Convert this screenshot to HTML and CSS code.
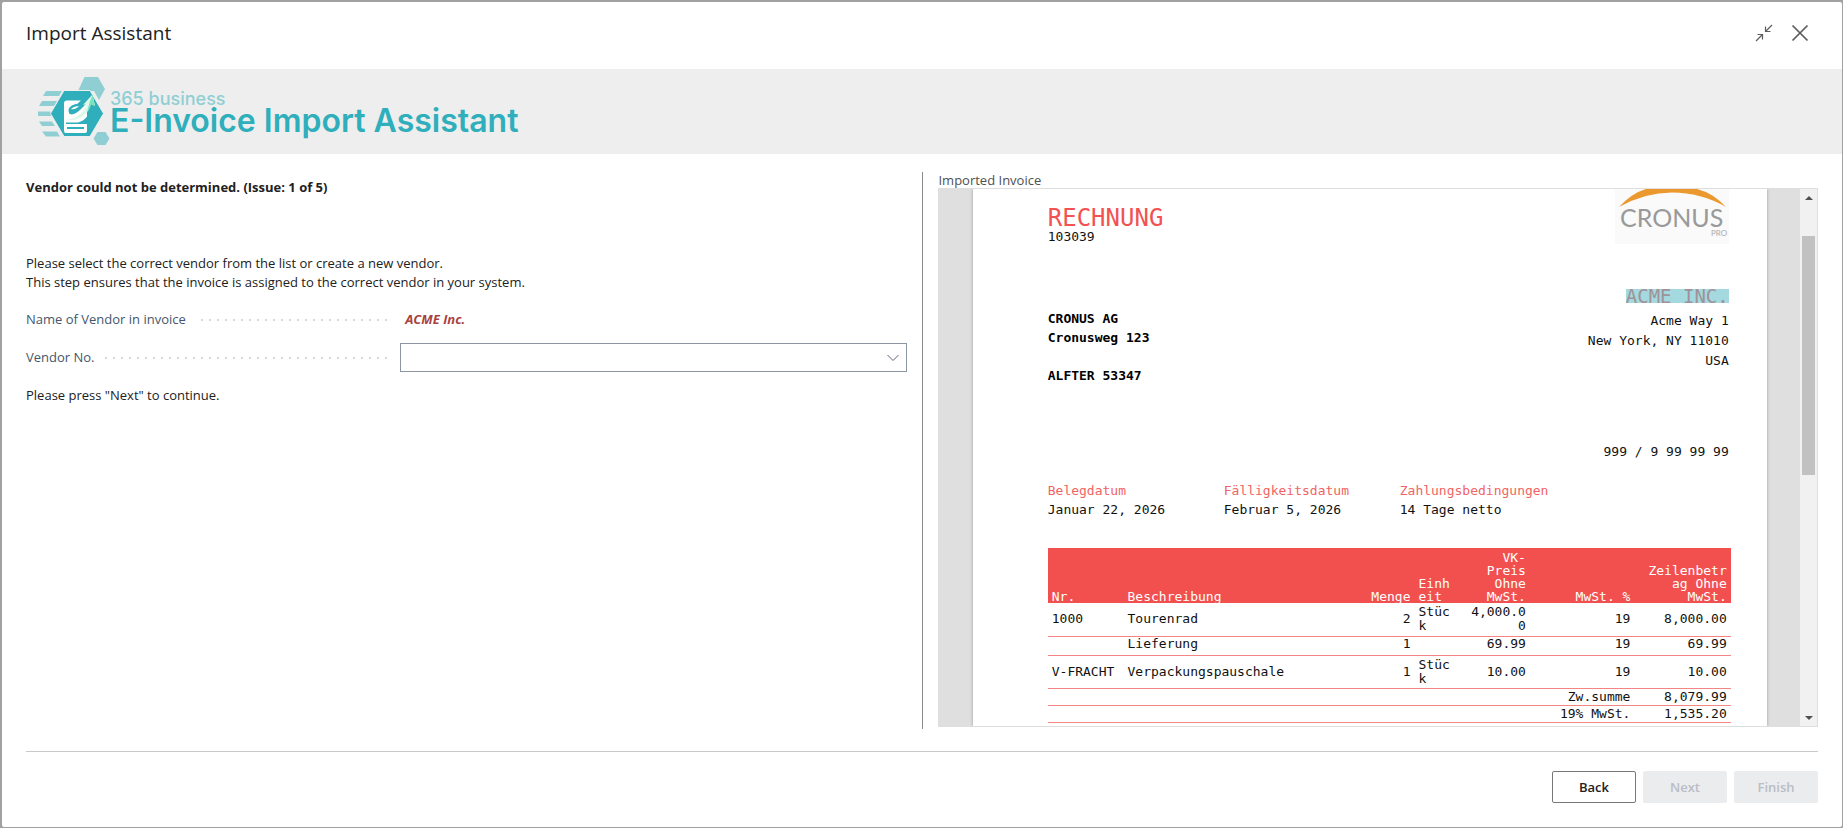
FILE: index.html
```html
<!DOCTYPE html>
<html lang="en">
<head>
<meta charset="utf-8">
<title>Import Assistant</title>
<link rel="stylesheet" href="styles.css">
</head>
<body>
<main class="dialog">
  <header class="dialog-header">
    <h1 class="dialog-title">Import Assistant</h1>
    <div class="window-actions">
      <button class="icon-button" type="button" aria-label="Restore size">
        <svg width="18" height="18" viewBox="0 0 18 18" fill="none" stroke="#5c5c5c" stroke-width="1.200"><path d="M17 1 10.500 7.500M10.500 2.500v5h5M1 17l6.500-6.500M2.500 10.500h5v5"/></svg>
      </button>
      <button class="icon-button" type="button" aria-label="Close">
        <svg width="18" height="18" viewBox="0 0 18 18" fill="none" stroke="#5c5c5c" stroke-width="1.700"><path d="M1.500 1.500l15 15M16.500 1.500l-15 15"/></svg>
      </button>
    </div>
  </header>

  <section class="banner">
    <svg class="banner-logo" width="72" height="70" viewBox="0 0 72 70">
      <g fill="#8fcfd4">
        <path d="M46.500 2H60l7 12-6 11-5-9H40z"/>
        <path d="M59.500 57h8l4 6.500-4 6.500h-8l-4-6.500z"/>
        <path d="M8 16h16l-3 5H5zM4 26h15l-3 5H1zM0 36.500h12l2 4.500H0zM1 46.500h13l3 4.500H4zM4 56.500h15l3 5H8z"/>
      </g>
      <path fill="#2fafbb" stroke="#eee" d="M26 15.500h26l13.500 23-13.500 23H26l-13.500-23z"/>
      <path fill="#fff" d="M29 25.500h14l-4 3.500c-6 1-9 5-8 9 2 3 7 1 12-4l6-6v28q0 2-2 2H28q-2 0-2-2V28.500q0-3 3-3z"/>
      <path fill="#2fafbb" d="M31 37c-2-4 3-8 9-8h5c-3 5-8 9-12 9q-1 0-2-1z"/>
      <path fill="#fff" d="M33 34c2-2 5-3 8-3-2 2-5 4-8 3z"/>
      <path fill="#2fafbb" d="M28 47.500h12c4-1 7-3 9-6V49H28zM29 52h17v2H29z"/>
      <path fill="#dff8ec" d="M27 45c9-1 18-5 22-16l-4 1 9.500-10.500L57 31l-4-2c-3 11-13 18-26 16z"/>
      <path fill="#7de3b8" d="M54.500 19.500 57 31l-4-2c-1 4-2 6-4 8l3-11z"/>
    </svg>
    <div class="banner-text">
      <span class="banner-product">365 business</span>
      <span class="banner-name">E-Invoice Import Assistant</span>
    </div>
  </section>

  <div class="dialog-body">
    <form class="vendor-form" id="vendor-form">
      <h2 class="issue">Vendor could not be determined. (Issue: 1 of 5)</h2>
      <p class="text">Please select the correct vendor from the list or create a new vendor.<br>This step ensures that the invoice is assigned to the correct vendor in your system.</p>
      <div class="field">
        <div class="field-caption"><span class="field-label">Name of Vendor in invoice</span><span class="dots"></span></div>
        <output class="vendor-name">ACME Inc.</output>
      </div>
      <div class="field">
        <div class="field-caption"><label class="field-label" for="vendor-no">Vendor No.</label><span class="dots"></span></div>
        <div class="lookup">
          <input class="lookup-input" id="vendor-no" type="text">
          <button class="lookup-button" type="button" aria-label="Choose a vendor">
            <svg width="12" height="8" viewBox="0 0 12 8" fill="none" stroke="#5c6470"><path d="M.5 1 6 6.500 11.500 1"/></svg>
          </button>
        </div>
      </div>
      <p class="text">Please press "Next" to continue.</p>
    </form>

    <section class="preview">
      <h2 class="preview-label">Imported Invoice</h2>
      <div class="preview-frame">
        <div class="preview-canvas">
          <article class="invoice">
            <div class="invoice-top">
              <div class="invoice-left">
                <div class="invoice-heading">RECHNUNG</div>
                <div class="invoice-number">103039</div>
                <address class="recipient">CRONUS AG<br>Cronusweg 123<br><br>ALFTER 53347</address>
              </div>
              <div class="invoice-right">
                <svg class="cronus-logo" width="114" height="55" viewBox="0 0 114 55">
                  <path fill="#fafafa" d="M0 0h114v55H0z"/>
                  <path fill="#eb982f" d="M4 18Q17 4 31 0H82Q98 4 111 18 86 3.500 57 3.500 30 3.500 4 18z"/>
                  <text class="cronus-name" x="5" y="38">CRONUS</text>
                  <text class="cronus-pro" x="96" y="47">PRO</text>
                </svg>
                <mark class="sender">ACME INC.</mark>
                <address class="sender-address">Acme Way 1<br>New York, NY 11010<br>USA</address>
                <div class="sender-phone">999 / 9 99 99 99</div>
              </div>
            </div>
            <dl class="terms">
              <div><dt>Belegdatum</dt><dd>Januar 22, 2026</dd></div>
              <div><dt>Fälligkeitsdatum</dt><dd>Februar 5, 2026</dd></div>
              <div><dt>Zahlungsbedingungen</dt><dd>14 Tage netto</dd></div>
            </dl>
            <table class="lines">
              <colgroup><col class="col-no"><col class="col-text"><col class="col-qty"><col class="col-unit"><col class="col-price"><col class="col-vat"><col class="col-total"></colgroup>
              <thead>
                <tr><th>Nr.</th><th>Beschreibung</th><th class="num">Menge</th><th>Einh<br>eit</th><th class="num">VK-<br>Preis<br>Ohne<br>MwSt.</th><th class="num">MwSt. %</th><th class="num">Zeilenbetr<br>ag Ohne<br>MwSt.</th></tr>
              </thead>
              <tbody>
                <tr class="tall"><td>1000</td><td>Tourenrad</td><td class="num">2</td><td>Stüc<br>k</td><td class="num">4,000.0<br>0</td><td class="num">19</td><td class="num">8,000.00</td></tr>
                <tr class="single"><td></td><td>Lieferung</td><td class="num">1</td><td></td><td class="num">69.99</td><td class="num">19</td><td class="num">69.99</td></tr>
                <tr class="tall"><td>V-FRACHT</td><td>Verpackungspauschale</td><td class="num">1</td><td>Stüc<br>k</td><td class="num">10.00</td><td class="num">19</td><td class="num">10.00</td></tr>
                <tr class="sum"><td class="num" colspan="6">Zw.summe</td><td class="num">8,079.99</td></tr>
                <tr class="sum"><td class="num" colspan="6">19% MwSt.</td><td class="num">1,535.20</td></tr>
              </tbody>
            </table>
          </article>
        </div>
        <div class="scrollbar" aria-hidden="true">
          <span class="arrow arrow-up"></span>
          <span class="track-above"></span>
          <span class="thumb"></span>
          <span class="track-below"></span>
          <span class="arrow arrow-down"></span>
        </div>
      </div>
    </section>
  </div>

  <footer class="dialog-footer">
    <button class="button" type="button">Back</button>
    <button class="button" type="button" disabled>Next</button>
    <button class="button" type="button" disabled>Finish</button>
  </footer>
</main>
</body>
</html>
```
FILE: styles.css
```css
* { box-sizing: border-box; }

body {
  margin: 0;
  height: 100vh;
  padding: 2px 1px 1px 2px;
  display: flex;
  background: #a1a1a1;
  color: #212121;
  font: 13px/19px "Open Sans", "Noto Sans", sans-serif;
}

h1, h2, p, dl, dd { margin: 0; }
button, input { font: inherit; color: inherit; }
address { font-style: normal; }

.dialog {
  flex: 1;
  min-width: 0;
  display: flex;
  flex-direction: column;
  background: #fff;
  border-radius: 2px;
}

.dialog-header {
  height: 67px;
  padding: 0 33px 5px 24px;
  display: flex;
  align-items: center;
  justify-content: space-between;
}
.dialog-title { font-size: 19px; line-height: 28px; font-weight: 400; }
.window-actions { display: flex; gap: 18px; }
.icon-button { display: flex; padding: 0; border: 0; background: none; }

.banner {
  height: 85px;
  padding: 6px 36px;
  display: flex;
  background: #eee;
}
.banner-logo { flex: none; }
.banner-text {
  display: flex;
  flex-direction: column;
  padding-top: 14px;
  font-family: Inter, sans-serif;
  color: #2fafbb;
}
.banner-product { font-size: 18px; line-height: 20px; font-weight: 500; color: #8fcfd4; }
.banner-name { font-size: 32px; line-height: 24px; font-weight: 600; white-space: nowrap; }

.dialog-body {
  flex: 1;
  min-height: 0;
  margin-right: 24px;
  padding: 18px 0 22px 24px;
  display: grid;
  grid-template-columns: 898fr 895fr;
}

.vendor-form {
  padding: 6px 15px 0 0;
  border-right: 1px solid #8a8a8a;
  display: flex;
  flex-direction: column;
}
.issue { font-size: 13px; line-height: 19px; font-weight: 700; margin-bottom: 57px; }
.vendor-form .text { margin-bottom: 13px; }
.field {
  height: 29px;
  margin-bottom: 9px;
  display: grid;
  grid-template-columns: 363fr 507fr;
  gap: 11px;
  align-items: center;
}
.field-caption { display: flex; align-items: center; gap: 10px; color: #45566c; }
.dots {
  flex: 1;
  height: 2px;
  margin-right: 2px;
  background: repeating-linear-gradient(to left, #d8d8d8 0 2px, transparent 2px 8px);
}
.vendor-name { padding-left: 5px; color: #a9423f; font-weight: 700; font-style: italic; }
.lookup { display: flex; height: 29px; border: 1px solid #8c95a3; }
.lookup-input { flex: 1; min-width: 0; border: 0; padding: 0 5px; outline: 0; background: none; }
.lookup-button { display: flex; align-items: center; padding: 0 7px; border: 0; background: none; }
.field + .text { margin-top: 5px; }

.preview {
  min-height: 0;
  padding-left: 15px;
  display: flex;
  flex-direction: column;
}
.preview-label { font-size: 13px; line-height: 16px; font-weight: 400; color: #505050; }
.preview-frame {
  flex: 1;
  min-height: 0;
  margin-bottom: 2px;
  border: 1px solid #dedede;
  display: flex;
}
.preview-canvas {
  flex: 1;
  min-width: 0;
  overflow: hidden;
  background: #dfdfdf;
}

.invoice {
  max-width: 794px;
  min-height: 100%;
  margin: 0 auto;
  padding: 0 36px 0 75px;
  background: #fff;
  box-shadow: 0 0 3px #999;
  color: #111;
  font-family: "DejaVu Sans Mono", "Liberation Mono", monospace;
  font-size: 13px;
}
.invoice-top { display: flex; justify-content: space-between; padding-right: 2px; }
.invoice-left { padding-top: 17px; }
.invoice-heading { font-size: 24px; line-height: 24px; color: #f25252; }
.invoice-number { line-height: 14px; }
.recipient { margin-top: 65px; font-weight: 700; line-height: 19px; color: #000; }
.invoice-right {
  display: flex;
  flex-direction: column;
  align-items: flex-end;
  text-align: right;
  line-height: 20px;
}
.cronus-logo { font-family: Lato, sans-serif; }
.cronus-name { font-size: 25px; fill: #999; }
.cronus-pro { font-size: 8px; fill: #aaa; }
.sender {
  margin-top: 45px;
  font-size: 19px;
  line-height: 14px;
  color: #9f9298;
  background: #a3d9df;
}
.sender-address { margin-top: 8px; }
.sender-phone { margin-top: 71px; }

.terms {
  margin-top: 19px;
  display: grid;
  grid-template-columns: 176fr 176fr 331fr;
  line-height: 19px;
}
.terms dt { color: #f26464; }

.lines {
  width: 100%;
  margin-top: 29px;
  table-layout: fixed;
  border-collapse: collapse;
  line-height: 14px;
}
.col-no { width: 11.1%; }
.col-text { width: 30.9%; }
.col-qty { width: 11.7%; }
.col-unit { width: 5.8%; }
.col-price { width: 11.1%; }
.col-vat { width: 15.3%; }
.col-total { width: 14.1%; }
.lines th {
  height: 55px;
  padding: 0 4px;
  background: #f2504f;
  color: #fff;
  font-weight: 400;
  line-height: 13px;
  text-align: left;
  vertical-align: bottom;
}
.lines td { padding: 0 4px; border-bottom: 1px solid #f58585; white-space: nowrap; }
.lines .num { text-align: right; }
.tall { height: 33px; }
.single { height: 19px; }
.single td { padding-bottom: 3px; }
.sum { height: 17px; }

.scrollbar {
  width: 17px;
  padding: 0 2px;
  display: flex;
  flex-direction: column;
  align-items: center;
  background: #f1f1f1;
}
.arrow { height: 17px; display: flex; align-items: center; }
.arrow::before { content: ""; border: 4px solid transparent; border-top-width: 0; border-bottom-color: #505050; }
.arrow-down::before { border-width: 4px 4px 0; border-top-color: #505050; }
.track-above { flex: 30; }
.thumb { flex: 239; width: 100%; background: #c1c1c1; }
.track-below { flex: 234; }

.dialog-footer {
  margin: 0 24px;
  padding: 19px 0 24px;
  border-top: 1px solid #c9c9c9;
  display: flex;
  justify-content: flex-end;
  gap: 7px;
}
.button {
  width: 84px;
  height: 32px;
  padding: 0;
  border: 1px solid #777;
  border-radius: 2px;
  background: #fff;
  font-weight: 600;
}
.button:disabled { border-color: #ebecee; background: #ebecee; color: #b9bdc6; }
```
